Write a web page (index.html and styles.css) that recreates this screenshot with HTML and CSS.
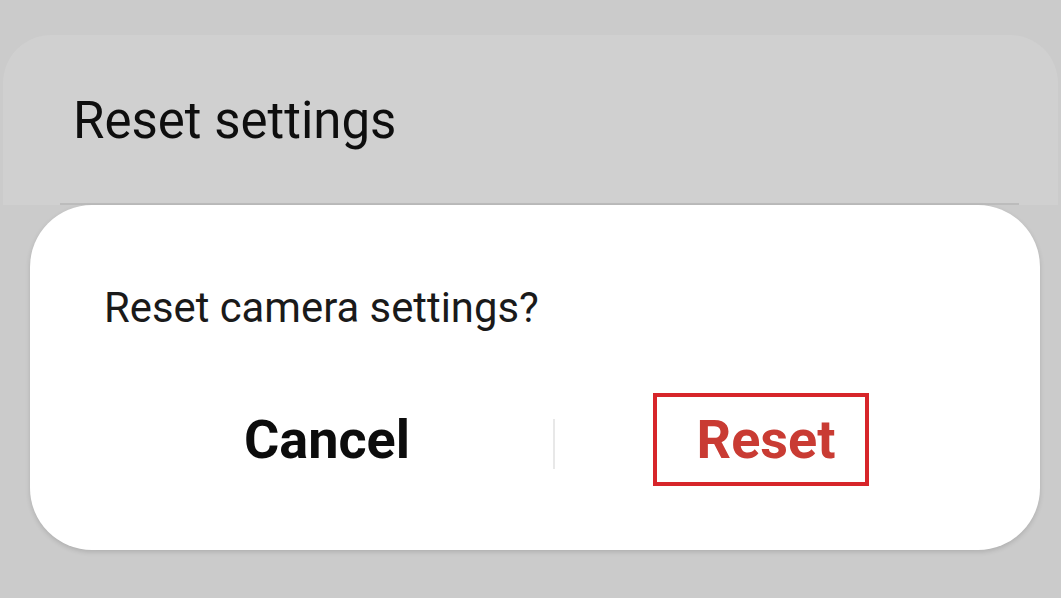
FILE: index.html
```html
<!DOCTYPE html>
<html lang="en">
<head>
<meta charset="utf-8">
<title>Reset settings</title>
<link rel="stylesheet" href="styles.css">
</head>
<body>
<div class="screen">
  <div class="card">
    <div class="card-title">Reset settings</div>
    <div class="card-divider"></div>
  </div>
  <div class="dialog">
    <div class="dialog-message">Reset camera settings?</div>
    <div class="dialog-actions">
      <div class="action-cell">
        <span class="action action-cancel">Cancel</span>
      </div>
      <div class="action-sep"></div>
      <div class="action-cell action-cell-right">
        <span class="action action-reset">Reset</span>
      </div>
    </div>
  </div>
</div>
</body>
</html>
```

FILE: styles.css
```css
html, body {
  margin: 0;
  padding: 0;
}

body {
  width: 1061px;
  height: 598px;
  overflow: hidden;
  background: #cbcbcb;
  font-family: Roboto, "Liberation Sans", Arial, sans-serif;
}

.screen {
  padding-top: 35px;
}

.card {
  margin: 0 3px;
  padding-top: 56px;
  background: #d0d0d0;
  border-radius: 48px 48px 0 0;
}

.card-title {
  padding-left: 70px;
  font-size: 51px;
  line-height: 60px;
  color: #0e0e0e;
}

.card-divider {
  margin: 52px 39px 0 57px;
  height: 2px;
  background: #bcbcbc;
}

.dialog {
  margin: 0 21px 0 30px;
  height: 345px;
  box-sizing: border-box;
  background: #ffffff;
  border-radius: 62px;
  box-shadow: 0 2px 5px rgba(0, 0, 0, 0.14);
  padding-top: 79px;
}

.dialog-message {
  padding-left: 74px;
  font-size: 41.8px;
  line-height: 48px;
  color: #1a1a1a;
}

.dialog-actions {
  margin-top: 61px;
  padding-left: 71px;
  display: grid;
  grid-template-columns: 452px 2px 423px;
  height: 93px;
  align-items: center;
}

.action-cell {
  display: flex;
  justify-content: center;
  align-items: center;
  height: 93px;
}

.action-cell-right {
  padding-right: 11px;
}

.action-sep {
  height: 50px;
  background: #e8e8e8;
  margin-top: 8px;
}

.action {
  font-size: 54px;
  font-weight: 700;
  line-height: 64px;
}

.action-cancel {
  color: #0c0c0c;
}

.action-reset {
  color: #c93b33;
  box-sizing: border-box;
  width: 216px;
  height: 93px;
  border: 4px solid #d7252a;
  display: flex;
  justify-content: center;
  align-items: center;
  padding-left: 10px;
}
```
